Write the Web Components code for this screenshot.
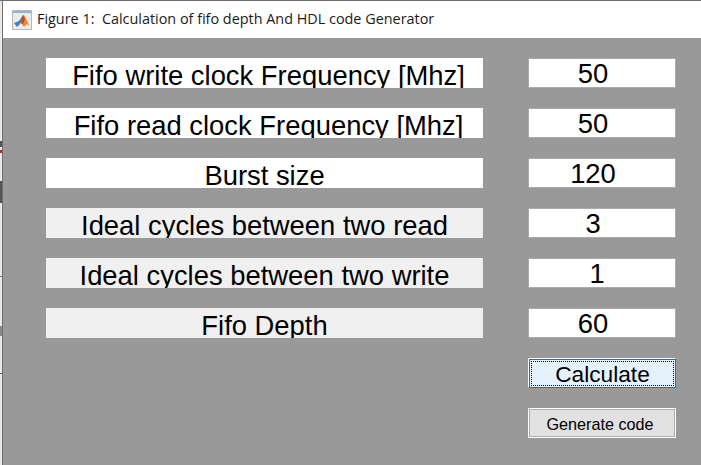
<!DOCTYPE html>
<html>
<head>
<meta charset="utf-8">
<title>Fifo depth</title>
<style>
  html, body { margin: 0; padding: 0; background: #999999; }
  body { width: 701px; height: 465px; overflow: hidden; font-family: "Liberation Sans", Arial, sans-serif; }
</style>
</head>
<body>
<figure-window heading="Figure 1:  Calculation of fifo depth And HDL code Generator">
  <param-row label="Fifo write clock Frequency [Mhz]" value="50" tone="white" nudge></param-row>
  <param-row label="Fifo read clock Frequency [Mhz]" value="50" tone="white" nudge></param-row>
  <param-row label="Burst size" value="120" tone="white"></param-row>
  <param-row label="Ideal cycles between two read" value="3"></param-row>
  <param-row label="Ideal cycles between two write" value="1" narrow></param-row>
  <param-row label="Fifo Depth" value="60"></param-row>
  <action-button kind="focused" label="Calculate"></action-button>
  <action-button label="Generate code"></action-button>
</figure-window>

<script>
const templateWindow = document.createElement("template");
templateWindow.innerHTML = `
  <style>
    :host {
      display: grid;
      grid-template-columns: 3px 1fr;
      grid-template-rows: 1px 37px 1fr;
      width: 701px;
      height: 465px;
    }
    .top-edge { grid-column: 1 / 3; background: #6e6e6e; }
    .left-edge {
      grid-row: 2 / 4;
      background: #e9e9e9;
      border-right: 1px solid #6f6f6f;
      box-sizing: border-box;
    }
    .left-edge svg { display: block; }
    .title {
      display: flex;
      align-items: center;
      gap: 5px;
      padding-left: 9px;
      background: #ffffff;
      color: #1a1a1a;
      font: 14.4px/1 "Open Sans", "Noto Sans", sans-serif;
      white-space: pre;
    }
    .body {
      background: #999999;
      display: flex;
      flex-direction: column;
      gap: 20px;
      padding: 20px 25px 0 43px;
    }
  </style>
  <div class="top-edge"></div>
  <div class="left-edge">
    <svg width="2" height="427" viewBox="0 0 2 427">
      <rect y="140" width="2" height="6" fill="#555"/>
      <rect y="149" width="2" height="3" fill="#c22"/>
      <rect y="180" width="2" height="22" fill="#555"/>
      <rect y="275" width="2" height="1" fill="#777"/>
      <rect y="325" width="2" height="10" fill="#888"/>
      <rect y="372" width="2" height="1" fill="#555"/>
    </svg>
  </div>
  <div class="title">
    <svg width="20" height="20" viewBox="0 0 20 20">
      <rect x="0.5" y="0.5" width="19" height="19" fill="#ececec" stroke="#b8b8b8"/>
      <rect x="1" y="1" width="18" height="2" fill="#8fb4da"/>
      <path d="M2 13 L7 11 L11 5 L12 7 L8 14 L5 17Z" fill="#3f7fbf"/>
      <path d="M11 5 C13 4 14 10 18 16 L15 14 L12 17 L9 13Z" fill="#ee8a2c"/>
      <path d="M11 5 L13 9 L11 14 L9 13Z" fill="#c8441c"/>
    </svg>
    <span id="heading"></span>
  </div>
  <div class="body"><slot></slot></div>
`;

class FigureWindow extends HTMLElement {
  constructor() {
    super();
    this._root = this.attachShadow({ mode: "open" });
  }
  connectedCallback() {
    this._root.appendChild(templateWindow.content.cloneNode(true));
    this._root.querySelector("#heading").textContent = this.getAttribute("heading");
  }
}

const templateRow = document.createElement("template");
templateRow.innerHTML = `
  <style>
    :host {
      display: flex;
      justify-content: space-between;
      height: 30px;
      font: 27.4px/30px "Liberation Sans", Arial, sans-serif;
      color: #000;
    }
    .label, .value {
      box-sizing: border-box;
      text-align: center;
      white-space: nowrap;
      overflow: hidden;
    }
    /* descenders get cut by the box bottom, same as the matlab labels */
    .label { width: 437px; background: #f0f0f0; padding-top: 3px; }
    :host([tone="white"]) .label { background: #ffffff; }
    :host([nudge]) .label { padding-left: 8px; }
    .value {
      width: 148px;
      background: #ffffff;
      border: 1px solid #ababab;
      line-height: 26px;
      padding: 2px 18px 0 0;
    }
    :host([narrow]) .value { padding-right: 10px; }
  </style>
  <div class="label"></div>
  <div class="value"></div>
`;

class ParamRow extends HTMLElement {
  constructor() {
    super();
    this._root = this.attachShadow({ mode: "open" });
  }
  connectedCallback() {
    this._root.appendChild(templateRow.content.cloneNode(true));
    this._root.querySelector(".label").textContent = this.getAttribute("label");
    this._root.querySelector(".value").textContent = this.getAttribute("value");
  }
}

const templateButton = document.createElement("template");
templateButton.innerHTML = `
  <style>
    :host {
      display: block;
      align-self: flex-end;
      width: 148px;
      height: 30px;
      box-sizing: border-box;
    }
    .btn {
      box-sizing: border-box;
      width: 100%;
      height: 100%;
      border: 1px solid #ffffff;
      outline: 1px solid #adadad;
      outline-offset: -2px;
      background: #e1e1e1;
      color: #000;
      font: 16.2px/30px "Liberation Sans", Arial, sans-serif;
      text-align: center;
      padding-right: 4px;
    }
    :host([kind="focused"]) .btn {
      border-color: #ffffff #0078d7 #0078d7 #ffffff;
      box-shadow: inset 1px 1px 0 #0078d7;
      outline: none;
      background: #e5f1fb;
      font-size: 22.7px;
      position: relative;
      padding: 0 0 0 1px;
    }
    .focus { display: none; }
    :host([kind="focused"]) .focus {
      display: block;
      position: absolute;
      inset: 2px 1px 1px 2px;
      border: 1px dotted #000;
    }
  </style>
  <div class="btn"><span class="focus"></span><span class="text"></span></div>
`;

class ActionButton extends HTMLElement {
  constructor() {
    super();
    this._root = this.attachShadow({ mode: "open" });
  }
  connectedCallback() {
    this._root.appendChild(templateButton.content.cloneNode(true));
    this._root.querySelector(".text").textContent = this.getAttribute("label");
  }
}

window.customElements.define("figure-window", FigureWindow);
window.customElements.define("param-row", ParamRow);
window.customElements.define("action-button", ActionButton);
</script>
</body>
</html>
